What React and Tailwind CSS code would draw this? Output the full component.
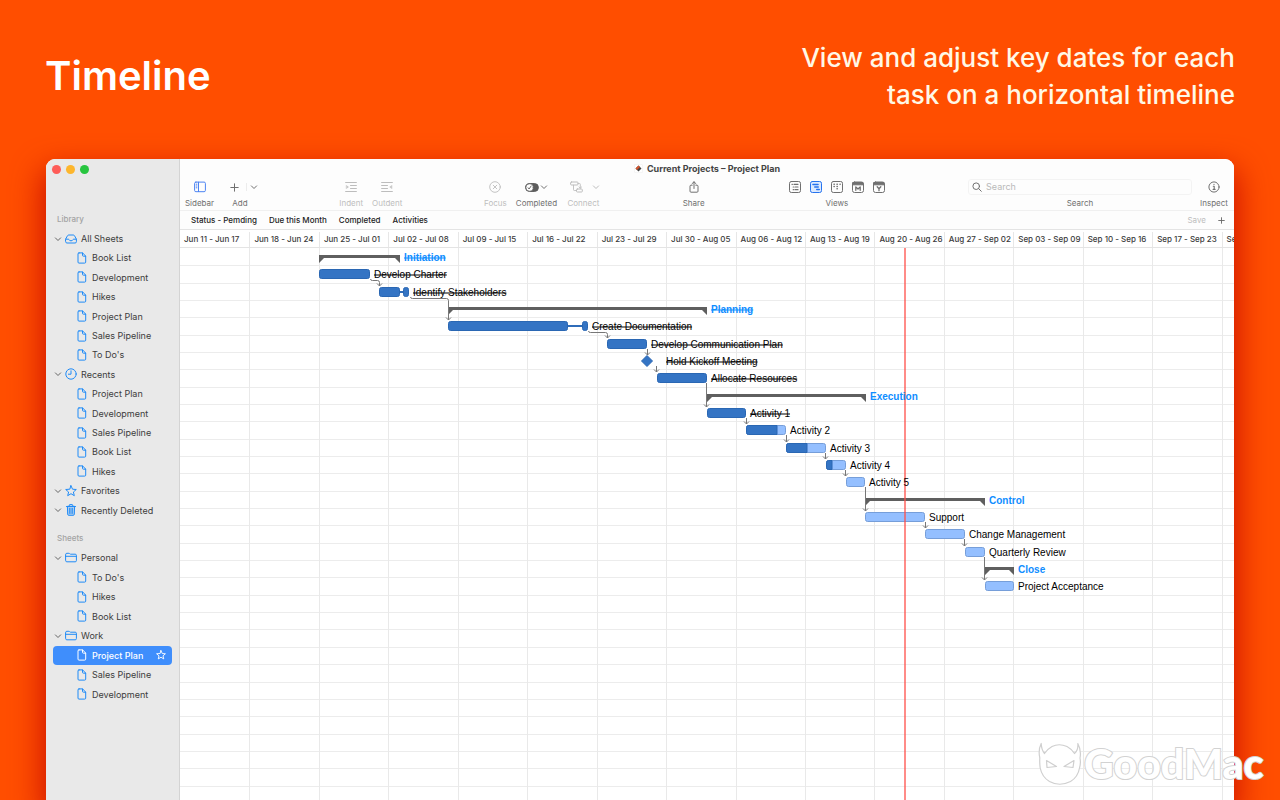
import React from "react";

const PITCH = 17.34;
const COLUMN = 69.4375;
const CHART_ROWS = 34;

const weeks = [
  "Jun 11 - Jun 17", "Jun 18 - Jun 24", "Jun 25 - Jul 01", "Jul 02 - Jul 08",
  "Jul 09 - Jul 15", "Jul 16 - Jul 22", "Jul 23 - Jul 29", "Jul 30 - Aug 05",
  "Aug 06 - Aug 12", "Aug 13 - Aug 19", "Aug 20 - Aug 26", "Aug 27 - Sep 02",
  "Sep 03 - Sep 09", "Sep 10 - Sep 16", "Sep 17 - Sep 23", "Sep 24 - Sep 30",
];

const tasks = [
  { name: "Initiation", type: "summary", from: 139, to: 220, done: true },
  { name: "Develop Charter", from: 139, to: 190, full: true, done: true },
  { name: "Identify Stakeholders", from: 199, to: 220, tail: [223, 229], full: true, done: true },
  { name: "Planning", type: "summary", from: 268, to: 527, done: true },
  { name: "Create Documentation", from: 268, to: 388, tail: [402, 408], full: true, done: true },
  { name: "Develop Communication Plan", from: 427, to: 467, full: true, done: true },
  { name: "Hold Kickoff Meeting", type: "milestone", from: 467, to: 482, done: true },
  { name: "Allocate Resources", from: 477, to: 527, full: true, done: true },
  { name: "Execution", type: "summary", from: 527, to: 686 },
  { name: "Activity 1", from: 527, to: 566, full: true, done: true },
  { name: "Activity 2", from: 566, to: 606, progress: 31 },
  { name: "Activity 3", from: 606, to: 646, progress: 21 },
  { name: "Activity 4", from: 646, to: 666, progress: 6 },
  { name: "Activity 5", from: 666, to: 685 },
  { name: "Control", type: "summary", from: 685, to: 805 },
  { name: "Support", from: 685, to: 745 },
  { name: "Change Management", from: 745, to: 785 },
  { name: "Quarterly Review", from: 785, to: 805 },
  { name: "Close", type: "summary", from: 805, to: 834 },
  { name: "Project Acceptance", from: 805, to: 834 },
];

const links = [
  [1, 190, 2, 199], [2, 230, 4, 268], [4, 408, 5, 427], [5, 467, 6, 467],
  [6, 476, 7, 476], [7, 526, 9, 526], [9, 566, 10, 566], [10, 606, 11, 606],
  [11, 645, 12, 645], [12, 665, 13, 665], [13, 685, 15, 685], [15, 745, 16, 745],
  [16, 784, 17, 784], [17, 804, 19, 804],
];

const rowMid = (row) => Math.round(PITCH * row + 9);

function Bar({ from, to, mid, full, progress }) {
  return (
    <g>
      <rect x={from + 0.5} y={mid - 4.5} width={to - from - 1} height="9" rx="2" fill={full ? "#3474c4" : "#94bfff"} stroke={full ? "#2a67b3" : "#769ed9"} />
      {progress && (
        <path d={`M${from + progress} ${mid - 4.5}H${from + 2.5}a2 2 0 0 0 -2 2v5a2 2 0 0 0 2 2H${from + progress}z`} fill="#3474c4" stroke="#2a67b3" />
      )}
    </g>
  );
}

function Chart() {
  return (
    <svg width="1111" height="590" className="block shrink-0" role="img" aria-label="Project timeline">
      {Array.from({ length: CHART_ROWS }, (_, i) => (
        <rect key={i} x="0" y={Math.round(PITCH * (i + 1))} width="1111" height="1" fill="#ececec" />
      ))}
      {Array.from({ length: 16 }, (_, i) => (
        <rect key={i} x={Math.round(COLUMN * (i + 1))} y="0" width="1" height="590" fill="#e9e9e9" />
      ))}
      {tasks.map((t, i) => {
        const mid = rowMid(i);
        if (t.type === "summary")
          return <path key={t.name} d={`M${t.from} ${mid - 2}H${t.to}V${mid + 6}L${t.to - 5} ${mid + 1}H${t.from + 5}L${t.from} ${mid + 6}z`} fill="#5f5f5f" />;
        if (t.type === "milestone")
          return <path key={t.name} d={`M${t.from} ${mid - 5.5}l5.5 5.5l-5.5 5.5l-5.5 -5.5z`} fill="#3474c4" stroke="#2a67b3" strokeLinejoin="round" />;
        return (
          <g key={t.name}>
            {t.tail && <rect x={t.to - 1} y={mid - 1} width={t.tail[0] - t.to + 2} height="2" fill="#2f6cb9" />}
            <Bar {...t} mid={mid} />
            {t.tail && <Bar from={t.tail[0]} to={t.tail[1]} mid={mid} full />}
          </g>
        );
      })}
      {links.map(([a, x1, b, x2]) => {
        const y1 = rowMid(a) + 5;
        const y2 = rowMid(b) - 6;
        return (
          <g key={a} fill="none" stroke="#777" strokeWidth="1">
            <path d={x1 === x2 ? `M${x1 + 0.5} ${y1}V${y2}` : `M${x1 + 0.5} ${y1}q0 1.5 2 1.5H${x2 - 1.5}q2 0 2 2V${y2}`} />
            <path d={`M${x2 - 2} ${y2 - 2.5}l2.500 2.500l2.500 -2.500`} />
          </g>
        );
      })}
      <rect x="724" y="0" width="2" height="590" fill="#ff4f48" opacity="0.65" />
      {tasks.map((t, i) => (
        <text
          key={t.name}
          x={(t.tail ? t.tail[1] : t.to) + 4}
          y={Math.round(PITCH * i) + 13}
          className={`text-[10px] font-['Liberation_Sans',sans-serif] ${t.type === "summary" ? "fill-[#0f8dff] font-bold" : "fill-black"} ${t.done ? "line-through" : ""}`}
        >
          {t.name}
        </text>
      ))}
    </svg>
  );
}

const line = { fill: "none", stroke: "currentColor", strokeLinecap: "round", strokeLinejoin: "round" };

const FileIcon = () => (
  <svg width="12" height="12" viewBox="0 0 12 12" {...line} strokeWidth="1">
    <path d="M3 .9h3.600l3.100 3.200v6q0 1-1 1H3q-1 0-1-1v-8.200q0-1 1-1zM6.500 1v2.300q0 .9.9.9h2.200" />
  </svg>
);
const StarIcon = () => (
  <svg width="12" height="12" viewBox="0 0 12 12" {...line} strokeWidth="1">
    <path d="M6 .7l1.500 3.500 3.800.3-2.900 2.500.9 3.700L6 8.700l-3.300 2 .9-3.700L.7 4.500l3.800-.3z" />
  </svg>
);
const TrayIcon = () => (
  <svg width="12" height="12" viewBox="0 0 12 12" {...line} strokeWidth="1">
    <path d="M.6 6.200L2.500 2.700q.4-.7 1.200-.7h4.600q.8 0 1.200.7l1.900 3.500v2.500q0 1.300-1.300 1.300H1.900Q.6 10 .6 8.700zM.6 6.200h2.900q.4 0 .6.600.4 1 1.900 1t1.900-1q.2-.6.600-.6h2.900" />
  </svg>
);
const ClockIcon = () => (
  <svg width="12" height="12" viewBox="0 0 12 12" {...line} strokeWidth="1">
    <circle cx="6" cy="6" r="5.200" />
    <path d="M6 2.800V6.200H3.400" />
  </svg>
);
const TrashIcon = () => (
  <svg width="12" height="12" viewBox="0 0 12 12" {...line} strokeWidth="1">
    <path d="M2.400 2.700l.3 7.600q0 1 1 1h4.600q1 0 1-1l.3-7.600z" fill="currentColor" fillOpacity=".3" />
    <path d="M1.500 2.500h9M4.300 2.300V1.200q0-.6.600-.6h2.200q.6 0 .600.6v1.100" />
    <path d="M4.500 4.300l.1 5.200M6 4.300v5.200M7.500 4.300l-.1 5.200" strokeWidth=".8" />
  </svg>
);
const FolderIcon = () => (
  <svg width="12" height="12" viewBox="0 0 12 12" {...line} strokeWidth="1">
    <path d="M.6 2.500q0-1.200 1.200-1.200h2.100q.5 0 .9.500.3.400.9.400h4.500q1.200 0 1.200 1.200v5.200q0 1.200-1.200 1.200H1.800Q.6 9.800.6 8.600zM.6 4.300h10.800" />
  </svg>
);
const Chevron = () => (
  <svg width="8" height="8" viewBox="0 0 8 8" {...line} strokeWidth="1">
    <path d="M1.400 2.900L4 5.500l2.600-2.600" />
  </svg>
);

const library = [
  { name: "All Sheets", icon: TrayIcon },
  { name: "Book List", child: true }, { name: "Development", child: true }, { name: "Hikes", child: true },
  { name: "Project Plan", child: true }, { name: "Sales Pipeline", child: true }, { name: "To Do's", child: true },
  { name: "Recents", icon: ClockIcon },
  { name: "Project Plan", child: true }, { name: "Development", child: true }, { name: "Sales Pipeline", child: true },
  { name: "Book List", child: true }, { name: "Hikes", child: true },
  { name: "Favorites", icon: StarIcon },
  { name: "Recently Deleted", icon: TrashIcon },
];
const sheets = [
  { name: "Personal", icon: FolderIcon },
  { name: "To Do's", child: true }, { name: "Hikes", child: true }, { name: "Book List", child: true },
  { name: "Work", icon: FolderIcon },
  { name: "Project Plan", child: true, selected: true },
  { name: "Sales Pipeline", child: true }, { name: "Development", child: true },
];

function SideItem({ item }) {
  const Icon = item.child ? FileIcon : item.icon;
  return (
    <li className="flex">
      <button
        type="button"
        className={`flex w-full items-center gap-1 rounded-[4px] text-left ${item.child ? "pl-[23px]" : ""} ${item.selected ? "bg-[#3f8efc] font-medium text-white" : "text-[#3c3c3c]"}`}
      >
        {!item.child && <span className="pl-[1px] text-[#666]"><Chevron /></span>}
        <span className={item.selected ? "text-white" : "-ml-px text-[#1f8bf7] first:ml-0"}><Icon /></span>
        <span>{item.name}</span>
        {item.selected && (
          <span className="ml-auto pr-[6px]">
            <svg width="10" height="10" viewBox="0 0 12 12" {...line} strokeWidth="1.100">
              <path d="M6 .7l1.500 3.500 3.800.3-2.900 2.500.9 3.700L6 8.700l-3.300 2 .9-3.700L.7 4.500l3.800-.3z" />
            </svg>
          </span>
        )}
      </button>
    </li>
  );
}

function Sidebar() {
  return (
    <nav aria-label="Sheets" className="w-[134px] shrink-0 border-r border-[#d4d4d4] bg-[#e9e9e9] px-[7px] text-[9px]">
      <div className="-ml-px flex h-5 items-center gap-[5px]">
        <button type="button" aria-label="Close window" className="size-[9px] rounded-full bg-[#fe5c58]" />
        <button type="button" aria-label="Minimize window" className="size-[9px] rounded-full bg-[#fdb62d]" />
        <button type="button" aria-label="Zoom window" className="size-[9px] rounded-full bg-[#27c53f]" />
      </div>
      <h2 className="mt-[34px] pl-1 text-[8px] leading-3 font-medium text-[#a3a3a3]">Library</h2>
      <ul className="mt-1 grid h-[291px] auto-rows-fr">
        {library.map((item, i) => <SideItem key={i} item={item} />)}
      </ul>
      <h2 className="mt-3 pl-1 text-[8px] leading-3 font-medium text-[#a3a3a3]">Sheets</h2>
      <ul className="mt-1 grid h-[156px] auto-rows-fr">
        {sheets.map((item, i) => <SideItem key={i} item={item} />)}
      </ul>
    </nav>
  );
}

function Tool({ label, width, muted, children }) {
  return (
    <button type="button" className={`flex shrink-0 flex-col items-center ${width} ${muted ? "text-[#bdbdbd]" : "text-[#707070]"}`}>
      <span className="flex h-4 items-center justify-center">{children}</span>
      <span className="mt-[2px] text-[8px] leading-3">{label}</span>
    </button>
  );
}

const viewIcons = [
  { name: "Outline", body: <><rect x=".5" y=".5" width="11" height="11" rx="1.800" /><path d="M3 3.300h.4M5 3.300h4M4.200 6h.4M6 6h3M4.200 8.700h.4M6 8.700h3" strokeWidth="1.200" /></> },
  { name: "Timeline", active: true, body: <><rect x=".5" y=".5" width="11" height="11" rx="1.800" fill="#dceaff" /><path d="M3 3.500h5M4.800 6h3.400M6.800 8.500h2.400" strokeWidth="1.600" /></> },
  { name: "Board", body: <><rect x=".5" y=".5" width="11" height="11" rx="1.800" /><path d="M3 3.300h.3M6 3.300h.3M9 3.300h.2M3 5.500h.3M6 5.500h.3M6 7.700h.3" strokeWidth="1.400" /></> },
  { name: "Month", body: <><path d="M2.500 1h7q2 0 2 2v6.500q0 2-2 2h-7q-2 0-2-2V3q0-2 2-2z" /><path d="M1 1.500h10v2.300H1z" fill="currentColor" /><path d="M3.800 9.300V5.900L6 8l2.200-2.100v3.400" strokeWidth="1.300" /></> },
  { name: "Year", body: <><path d="M2.500 1h7q2 0 2 2v6.500q0 2-2 2h-7q-2 0-2-2V3q0-2 2-2z" /><path d="M1 1.500h10v2.300H1z" fill="currentColor" /><path d="M4.200 5.700L6 7.700l1.800-2M6 7.700v2" strokeWidth="1.300" /></> },
];

function Toolbar() {
  return (
    <div className="flex h-[31px] items-start">
      <Tool label="Sidebar" width="w-[39px]">
        <svg width="12" height="12" viewBox="0 0 12 12" {...line} className="text-[#4c83f2]">
          <rect x=".6" y="1.100" width="10.800" height="9.600" rx="1.300" />
          <path d="M4.500 1.200v9.400M2.200 3.200h.7M2.200 5h.7M2.200 6.800h.7" />
        </svg>
      </Tool>
      <Tool label="Add" width="w-[42px]">
        <svg width="9" height="9" viewBox="0 0 9 9" {...line} className="ml-[7px]"><path d="M4.500 .8v7.400M.8 4.500h7.400" /></svg>
        <span className="mr-[3px] ml-[7px] h-2 w-px bg-[#ececec]" />
        <Chevron />
      </Tool>
      <span className="flex-[72]" />
      <Tool label="Indent" width="w-9" muted>
        <svg width="12" height="12" viewBox="0 0 12 12" {...line}><path d="M.6 1.500h10.800M5.500 4.500h5.900M5.500 7.500h5.900M.6 10.500h10.800" /><path d="M1.500 4.500L3.500 6l-2 1.500z" fill="currentColor" strokeWidth=".4" /></svg>
      </Tool>
      <Tool label="Outdent" width="w-9" muted>
        <svg width="12" height="12" viewBox="0 0 12 12" {...line}><path d="M.6 1.500h10.800M.6 4.500h5.900M.6 7.500h5.900M.6 10.500h10.800" /><path d="M10.700 4.500L8.700 6l2 1.500z" fill="currentColor" strokeWidth=".4" /></svg>
      </Tool>
      <span className="flex-[72]" />
      <Tool label="Focus" width="w-9" muted>
        <svg width="12" height="12" viewBox="0 0 12 12" {...line} strokeWidth=".9"><circle cx="6" cy="6" r="5.300" /><path d="M4.200 4.200l3.600 3.600M7.800 4.200L4.200 7.800" /></svg>
      </Tool>
      <Tool label="Completed" width="w-[46px]">
        <svg width="14" height="9" viewBox="0 0 14 9" {...line} className="text-[#5c5c5c]">
          <rect x=".6" y=".6" width="12.800" height="7.800" rx="3.900" fill="currentColor" />
          <circle cx="4.600" cy="4.500" r="3.700" fill="#fff" strokeWidth=".7" />
          <path d="M3.100 4.800l1 1.200 2-3" strokeWidth=".9" />
        </svg>
        <span className="ml-[1px]"><Chevron /></span>
      </Tool>
      <Tool label="Connect" width="w-12" muted>
        <svg width="13" height="12" viewBox="0 0 13 12" {...line} className="ml-1"><rect x=".6" y="1" width="7.400" height="3" rx=".8" /><rect x="6.500" y="8" width="5.800" height="3" rx=".8" /><path d="M8 2.500h1.500q.8 0 .8.800V7M3.500 4.200v4.500q0 .8.800.8h2M9 6l1.300 1.200L11.600 6" strokeWidth=".9" /></svg>
        <span className="ml-[9px]"><Chevron /></span>
      </Tool>
      <span className="flex-[68]" />
      <Tool label="Share" width="w-9">
        <svg width="12" height="12" viewBox="0 0 12 12" {...line}><path d="M4.200 4.200H3q-1 0-1 1v5q0 1 1 1h6q1 0 1-1v-5q0-1-1-1H7.800M6 7.500V.8M4 2.700L6 .8l2 1.900" /></svg>
      </Tool>
      <span className="flex-[72]" />
      <div className="flex w-[106px] shrink-0 flex-col items-center text-[#707070]">
        <div className="flex h-4 items-center gap-[9px]">
          {viewIcons.map((v) => (
            <button type="button" key={v.name} aria-label={v.name} className={v.active ? "text-[#2673ee]" : ""}>
              <svg width="12" height="12" viewBox="0 0 12 12" {...line} className="block">{v.body}</svg>
            </button>
          ))}
        </div>
        <span className="mt-[2px] text-[8px] leading-3">Views</span>
      </div>
      <span className="flex-[76]" />
      <div className="flex w-[228px] shrink-0 flex-col items-center text-[#707070]">
        <div className="flex h-4 w-56 items-center gap-1 rounded-[3px] border border-[#f3f3f3] pl-[3px]">
          <svg width="10" height="10" viewBox="0 0 10 10" {...line} className="shrink-0"><circle cx="4.200" cy="4.200" r="3.300" /><path d="M6.700 6.700l2.600 2.600" /></svg>
          <input id="search" type="search" placeholder="Search" className="min-w-0 flex-1 bg-transparent text-[9px] leading-3 outline-none placeholder:text-[#b9b9b9]" />
        </div>
        <label htmlFor="search" className="mt-[2px] text-[8px] leading-3">Search</label>
      </div>
      <Tool label="Inspect" width="w-10">
        <svg width="12" height="12" viewBox="0 0 12 12" {...line}><circle cx="6" cy="6" r="5.100" /><path d="M5.300 5.200H6.200v3M5.100 8.400h2M6 3.200v.2" strokeWidth="1.100" /></svg>
      </Tool>
    </div>
  );
}

function Watermark() {
  return (
    <svg width="232" height="50" viewBox="0 0 232 50" className="absolute right-[10px] bottom-[11px]" aria-hidden="true">
      <g fill="#fff" stroke="#cfcfcf" strokeWidth="1.200" strokeLinejoin="round">
        <path d="M6.500 14.500Q9.500 10 14 7.500Q21 4 29 7.500Q33 9.500 36.500 14.500Q40.500 11 39.800 4.500Q43.500 11 42 19Q43 24 41.500 29Q40 38 32.500 42.500Q21.500 48 11.500 42.500Q4 38 2.200 29Q1.500 24 1.800 19Q0 11 3.200 4.500Q3.500 11 6.500 14.500z" />
        <path d="M8.500 21.500L18.500 27.500L9 28.500zM36 21.500L26 27.500L35 28.500z" />
      </g>
      <text x="46" y="40" className="fill-white stroke-[#d2d2d2] stroke-2 text-[41px] font-black [paint-order:stroke] font-[Lato,sans-serif]">GoodMac</text>
    </svg>
  );
}

export default function App() {
  return (
    <div className="relative flex h-screen flex-col overflow-hidden bg-[#ff4e00] font-[Inter,sans-serif]">
      <header className="flex h-[159px] shrink-0 items-start justify-between px-[45px] pt-[39px] text-white">
        <h1 className="pt-[9px] text-[40px] leading-[56px] font-semibold">Timeline</h1>
        <p className="text-right text-[26px] leading-[37px] font-medium text-[#fff8e6]">
          View and adjust key dates for each
          <br />
          task on a horizontal timeline
        </p>
      </header>
      <div className="mx-[46px] flex min-h-0 flex-1 overflow-hidden rounded-t-[9px] bg-white shadow-[0_14px_30px_4px_rgba(190,0,0,0.75)]">
        <Sidebar />
        <main className="flex min-w-0 flex-1 flex-col overflow-hidden">
          <div className="shrink-0 bg-[#fdfdfd]">
            <div className="flex h-[19px] items-center justify-center gap-1 text-[9px] font-bold text-[#444]">
              <svg width="9" height="9" viewBox="0 0 9 9"><rect x=".3" y=".3" width="8.400" height="8.400" rx="1.500" fill="#fff" stroke="#e8e8e8" strokeWidth=".5" /><path d="M4.500 1.500L7.500 4.500l-3 3-3-3z" fill="#444" /><path d="M4.500 1.500l1.500 1.500L3 6 1.500 4.500z" fill="#d5552e" /></svg>
              Current Projects – Project Plan
            </div>
            <div className="pt-px">
              <Toolbar />
            </div>
            <div className="flex h-[19px] items-center gap-3 border-t border-[#f0f0f0] pr-[9px] pl-[11px] text-[8px] font-medium text-[#222]">
              <button type="button">Status - Pemding</button>
              <button type="button">Due this Month</button>
              <button type="button">Completed</button>
              <button type="button">Activities</button>
              <button type="button" className="ml-auto font-normal text-[#bdbdbd]">Save</button>
              <button type="button" aria-label="Add filter" className="text-[#666]">
                <svg width="7" height="7" viewBox="0 0 7 7" {...line} strokeWidth=".9"><path d="M3.500 .7v5.600M.7 3.500h5.600" /></svg>
              </button>
            </div>
          </div>
          <div className="grid h-[19px] w-[1111px] shrink-0 grid-cols-16 border-y border-[#e4e4e4] pt-[2px]">
            {weeks.map((w) => (
              <div key={w} className="border-l border-[#e7e7e7] pl-1 text-[8px] leading-[14px] font-medium whitespace-nowrap text-[#3a3a3a] first:border-transparent first:pl-[3px]">{w}</div>
            ))}
          </div>
          <div className="min-h-0 flex-1 overflow-hidden">
            <Chart />
          </div>
        </main>
      </div>
      <Watermark />
    </div>
  );
}
